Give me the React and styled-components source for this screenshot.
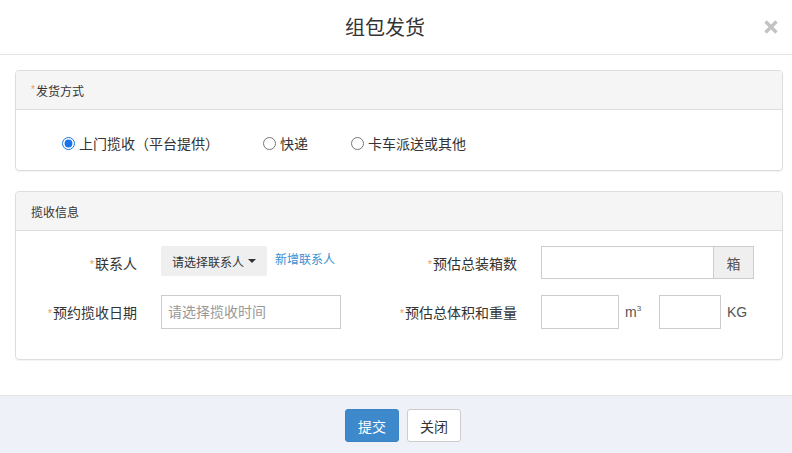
import React from 'react';
import styled, { createGlobalStyle } from 'styled-components';

const GlobalStyle = createGlobalStyle`
  html, body {
    margin: 0;
    padding: 0;
    background: #fff;
  }
  body {
    font-family: "Liberation Sans", "Noto Sans CJK SC", sans-serif;
    color: #333;
  }
  * {
    box-sizing: border-box;
  }
`;

const Modal = styled.div`
  display: flex;
  flex-direction: column;
  width: 792px;
  height: 453px;
  background: #fff;
`;

const Header = styled.div`
  display: grid;
  grid-template-columns: 1fr auto 1fr;
  align-items: center;
  height: 55px;
  padding: 0 13px 1px 0;
  border-bottom: 1px solid #e5e5e5;
`;

const Title = styled.h4`
  grid-column: 2;
  margin: 0 0 0 -9px;
  font-size: 20px;
  font-weight: normal;
  color: #333;
`;

const CloseButton = styled.button`
  grid-column: 3;
  justify-self: end;
  display: flex;
  padding: 0;
  border: 0;
  background: none;
  cursor: pointer;
`;

const Body = styled.div`
  flex: 1;
  display: flex;
  flex-direction: column;
  gap: 20px;
  padding: 15px 9px 0 15px;
`;

const Panel = styled.div`
  border: 1px solid #ddd;
  border-radius: 4px;
  box-shadow: 0 1px 1px rgba(0, 0, 0, 0.05);
  overflow: hidden;
`;

const PanelHeading = styled.div`
  display: flex;
  align-items: center;
  height: 39px;
  padding: 0 15px;
  background: #f5f5f5;
  border-bottom: 1px solid #ddd;
  font-size: 12px;
  color: #333;
`;

const Star = styled.span`
  color: #e9a15a;
  font-size: ${(p) => (p.small ? '10px' : '11px')};
  margin-right: 1px;
  position: relative;
  top: -1px;
`;

const RadioRow = styled.div`
  display: flex;
  align-items: center;
  height: 60px;
  padding: 6px 0 0 46px;
`;

const RadioLabel = styled.label`
  display: flex;
  align-items: center;
  margin-right: ${(p) => p.gap || 0}px;
  font-size: 14px;
  color: #333;
  cursor: pointer;
`;

const Radio = styled.input`
  width: 13px;
  height: 13px;
  margin: 0 4px 0 0;
  accent-color: #1a73e8;
`;

const FormGrid = styled.div`
  display: grid;
  grid-template-columns: 121px 214px 118px 213px;
  column-gap: 24px;
  row-gap: 16px;
  padding: 15px 0 30px;
  align-items: center;
`;

const Label = styled.label`
  justify-self: end;
  font-size: 14px;
  color: #333;
  white-space: nowrap;
`;

const Control = styled.div`
  display: flex;
  align-items: center;
  align-self: ${(p) => p.align || 'center'};
`;

const SelectButton = styled.button`
  display: flex;
  align-items: center;
  height: 30px;
  padding: 0 11px;
  border: 0;
  border-radius: 2px;
  background: #efefef;
  font-family: inherit;
  font-size: 12px;
  color: #333;
  cursor: pointer;
`;

const Caret = styled.span`
  width: 0;
  height: 0;
  margin-left: 4px;
  border-top: 4px solid #333;
  border-left: 4px solid transparent;
  border-right: 4px solid transparent;
`;

const Link = styled.a`
  margin: 0 0 6px 8px;
  font-size: 12px;
  color: #3a8fd3;
  text-decoration: none;
  cursor: pointer;
`;

const TextInput = styled.input`
  width: ${(p) => p.w}px;
  height: ${(p) => p.h || 34}px;
  padding: 0 6px;
  border: 1px solid #ccc;
  border-radius: 0;
  font-family: inherit;
  font-size: 14px;
  color: #555;
  outline: none;
  &::placeholder {
    color: #999;
  }
`;

const InputGroup = styled.div`
  display: flex;
  width: 213px;
  height: 33px;
`;

const Addon = styled.span`
  display: flex;
  align-items: center;
  justify-content: center;
  width: 40px;
  border: 1px solid #ccc;
  border-left: 0;
  background: #efefef;
  font-size: 14px;
  color: #555;
`;

const Unit = styled.span`
  width: ${(p) => p.w}px;
  font-size: 14px;
  color: #555;
  padding-left: 6px;
  sup {
    font-size: 8px;
  }
`;

const Footer = styled.div`
  display: flex;
  justify-content: center;
  gap: 8px;
  height: 58px;
  padding: 13px 0 0 14px;
  background: #eef1f8;
  border-top: 1px solid #e5e5e5;
`;

const Button = styled.button`
  height: 33px;
  padding: 0 12px;
  border: 1px solid ${(p) => (p.primary ? '#3a82c4' : '#ccc')};
  border-radius: 3px;
  background: ${(p) => (p.primary ? '#3e89cc' : '#fff')};
  color: ${(p) => (p.primary ? '#fff' : '#333')};
  font-family: inherit;
  font-size: 14px;
  cursor: pointer;
`;

export default function App() {
  return (
    <>
      <GlobalStyle />
      <Modal>
        <Header>
          <Title>组包发货</Title>
          <CloseButton aria-label="关闭">
            <svg width="16" height="16" viewBox="0 0 16 16">
              <path d="M2.5 2.5 L13.5 13.5 M13.5 2.5 L2.5 13.5" stroke="#c3c3c3" strokeWidth="3.4" />
            </svg>
          </CloseButton>
        </Header>
        <Body>
          <Panel>
            <PanelHeading>
              <Star small>*</Star>发货方式
            </PanelHeading>
            <RadioRow>
              <RadioLabel gap={44}>
                <Radio type="radio" name="ship" defaultChecked />
                上门揽收（平台提供）
              </RadioLabel>
              <RadioLabel gap={43}>
                <Radio type="radio" name="ship" />
                快递
              </RadioLabel>
              <RadioLabel>
                <Radio type="radio" name="ship" />
                卡车派送或其他
              </RadioLabel>
            </RadioRow>
          </Panel>
          <Panel>
            <PanelHeading>揽收信息</PanelHeading>
            <FormGrid>
              <Label>
                <Star>*</Star>联系人
              </Label>
              <Control align="start">
                <SelectButton>
                  请选择联系人
                  <Caret />
                </SelectButton>
                <Link>新增联系人</Link>
              </Control>
              <Label>
                <Star>*</Star>预估总装箱数
              </Label>
              <InputGroup>
                <TextInput w={173} h={33} />
                <Addon>箱</Addon>
              </InputGroup>

              <Label>
                <Star>*</Star>预约揽收日期
              </Label>
              <Control>
                <TextInput w={180} placeholder="请选择揽收时间" />
              </Control>
              <Label>
                <Star>*</Star>预估总体积和重量
              </Label>
              <Control>
                <TextInput w={78} />
                <Unit w={40}>
                  m<sup>3</sup>
                </Unit>
                <TextInput w={62} />
                <Unit w={30}>KG</Unit>
              </Control>
            </FormGrid>
          </Panel>
        </Body>
        <Footer>
          <Button primary>提交</Button>
          <Button>关闭</Button>
        </Footer>
      </Modal>
    </>
  );
}
